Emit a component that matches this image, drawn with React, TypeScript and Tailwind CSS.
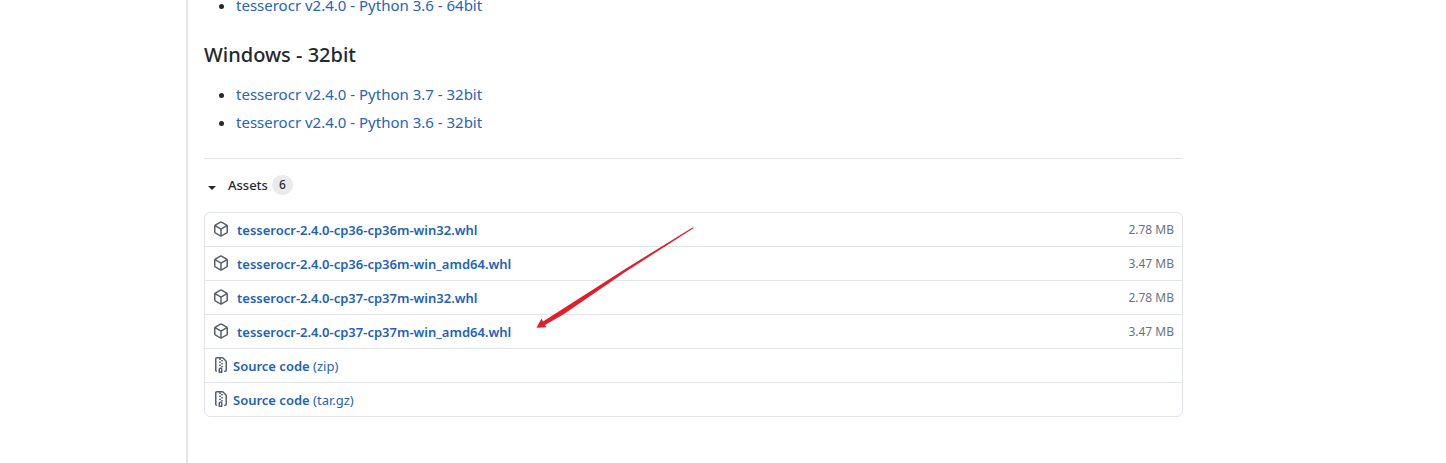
const wheels = [
  { name: 'tesserocr-2.4.0-cp36-cp36m-win32.whl', size: '2.78 MB' },
  { name: 'tesserocr-2.4.0-cp36-cp36m-win_amd64.whl', size: '3.47 MB' },
  { name: 'tesserocr-2.4.0-cp37-cp37m-win32.whl', size: '2.78 MB' },
  { name: 'tesserocr-2.4.0-cp37-cp37m-win_amd64.whl', size: '3.47 MB' },
];

const archives = ['zip', 'tar.gz'];

function PackageIcon() {
  return (
    <svg className="mb-0.5 size-4 shrink-0 text-[#586069]" viewBox="0 0 16 16" fill="currentColor" fillRule="evenodd" aria-hidden="true">
      <path d="M8.878.392a1.75 1.75 0 00-1.756 0l-5.25 3.045A1.75 1.75 0 001 4.951v6.098c0 .624.332 1.2.872 1.514l5.25 3.045a1.75 1.75 0 001.756 0l5.25-3.045c.54-.313.872-.89.872-1.514V4.951c0-.624-.332-1.2-.872-1.514L8.878.392zM7.875 1.69a.25.25 0 01.25 0l4.63 2.685L8 7.133 3.245 4.375l4.63-2.685zM2.5 5.677v5.372c0 .09.047.171.125.216l4.625 2.683V8.432L2.5 5.677zm6.25 8.271l4.625-2.683a.25.25 0 00.125-.216V5.677L8.75 8.432v5.516z" />
    </svg>
  );
}

function ZipIcon() {
  return (
    <svg className="mb-0.5 size-4 shrink-0 text-[#586069]" viewBox="0 0 16 16" fill="currentColor" fillRule="evenodd" aria-hidden="true">
      <path d="M3.5 1.75a.25.25 0 01.25-.25h3a.75.75 0 000 1.5h.5a.75.75 0 000-1.5h2.086a.25.25 0 01.177.073l2.914 2.914a.25.25 0 01.073.177v8.586a.25.25 0 01-.25.25h-.5a.75.75 0 000 1.5h.5A1.75 1.75 0 0014 13.25V4.664c0-.464-.184-.909-.513-1.237L10.573.513A1.75 1.75 0 009.336 0H3.75A1.75 1.75 0 002 1.75v11.5c0 .649.353 1.214.874 1.515a.75.75 0 10.752-1.298.25.25 0 01-.126-.217V1.75zM8.75 3a.75.75 0 000 1.5h.5a.75.75 0 000-1.5h-.5zM6 5.25a.75.75 0 01.75-.75h.5a.75.75 0 010 1.5h-.5A.75.75 0 016 5.25zm2 1.5A.75.75 0 018.75 6h.5a.75.75 0 010 1.5h-.5A.75.75 0 018 6.75zm-1.25.75a.75.75 0 000 1.5h.5a.75.75 0 000-1.5h-.5zM8 9.75A.75.75 0 018.75 9h.5a.75.75 0 010 1.5h-.5A.75.75 0 018 9.75zm-.75.75a1.75 1.75 0 00-1.75 1.75v3c0 .414.336.75.75.75h2.5a.75.75 0 00.75-.75v-3a1.75 1.75 0 00-1.75-1.75h-.5zM7 12.25a.25.25 0 01.25-.25h.5a.25.25 0 01.25.25v2.25H7v-2.25z" />
    </svg>
  );
}

function ReleaseLinks({ links }: { links: string[] }) {
  return (
    <ul className="list-disc space-y-1 pl-8 text-[15px] leading-6">
      {links.map((text) => (
        <li key={text}>
          <a href="#" className="text-[#2563bd] hover:underline">{text}</a>
        </li>
      ))}
    </ul>
  );
}

export default function App() {
  return (
    <main className="overflow-hidden bg-white pr-[263px] pl-[186px] font-['Noto_Sans','Open_Sans',sans-serif] text-[#24292e]">
      <article className="border-l-2 border-[#e1e4e8] pb-[46px] pl-4">
        <div className="-mt-[7px]">
          <ReleaseLinks links={['tesserocr v2.4.0 - Python 3.6 - 64bit']} />
          <h3 className="mt-[26px] mb-[15px] text-xl leading-6 font-medium">Windows - 32bit</h3>
          <ReleaseLinks links={['tesserocr v2.4.0 - Python 3.7 - 32bit', 'tesserocr v2.4.0 - Python 3.6 - 32bit']} />
        </div>

        <details open className="group mt-6 border-t border-[#e1e4e8] pt-[17px]">
          <summary className="flex h-5 cursor-pointer list-none items-center text-[13px] font-medium">
            <svg className="mt-1 mr-3 ml-1 h-1 w-2 -rotate-90 group-open:rotate-0" viewBox="0 0 8 4" fill="currentColor" aria-hidden="true">
              <path d="M0 0h8L4 4z" />
            </svg>
            Assets
            <span className="mb-0.5 ml-1 flex h-5 min-w-5 items-center justify-center rounded-full bg-[#e9eaec] px-[7px] text-xs">6</span>
          </summary>

          <div className="relative mt-4">
            <ul className="divide-y divide-[#e1e4e8] rounded-md border border-[#e1e4e8] text-[13px] leading-5">
              {wheels.map(({ name, size }) => (
                <li key={name} className="flex h-[34px] items-center justify-between px-2 py-1">
                  <a href="#" className="flex items-center gap-2 font-semibold text-[#1f5fbf] hover:underline">
                    <PackageIcon />
                    {name}
                  </a>
                  <small className="text-xs text-[#6a737d]">{size}</small>
                </li>
              ))}
              {archives.map((kind) => (
                <li key={kind} className="flex h-[34px] items-center px-2 py-1 last:h-[33px]">
                  <a href="#" className="flex items-center gap-1 text-[#1f5fbf] hover:underline">
                    <ZipIcon />
                    <span><strong className="font-semibold">Source code</strong> ({kind})</span>
                  </a>
                </li>
              ))}
            </ul>
            <svg className="pointer-events-none absolute top-[15px] left-[332px] h-[102px] w-[158px]" viewBox="0 0 158 102" aria-hidden="true">
              <path d="M157.5 .5L156.5 .5 90 41.500 7 94.500 5.500 91.500 0.500 100.800 10.500 100.300 9 98 28 87 90 44.500 157.500 1.200z" fill="#e01f2b" />
            </svg>
          </div>
        </details>
      </article>
    </main>
  );
}
